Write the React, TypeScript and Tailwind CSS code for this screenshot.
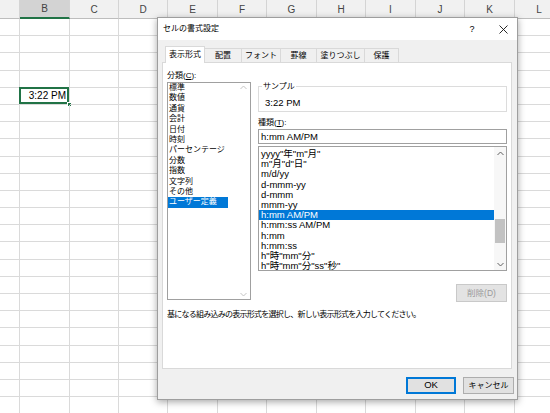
import React from "react";

const COLS = [
  { w: "w-[20px]", l: "" },
  { w: "w-[50px]", l: "B" },
  { w: "w-[49px]", l: "C" },
  { w: "w-[49px]", l: "D" },
  { w: "w-[50px]", l: "E" },
  { w: "w-[49px]", l: "F" },
  { w: "w-[50px]", l: "G" },
  { w: "w-[49px]", l: "H" },
  { w: "w-[50px]", l: "I" },
  { w: "w-[49px]", l: "J" },
  { w: "w-[50px]", l: "K" },
  { w: "w-[49px]", l: "L" },
];

const CATEGORIES = [
  "標準",
  "数値",
  "通貨",
  "会計",
  "日付",
  "時刻",
  "パーセンテージ",
  "分数",
  "指数",
  "文字列",
  "その他",
  "ユーザー定義",
];

const FORMATS = [
  'yyyy"年"m"月"',
  'm"月"d"日"',
  "m/d/yy",
  "d-mmm-yy",
  "d-mmm",
  "mmm-yy",
  "h:mm AM/PM",
  "h:mm:ss AM/PM",
  "h:mm",
  "h:mm:ss",
  'h"時"mm"分"',
  'h"時"mm"分"ss"秒"',
];

const TABS = [
  { t: "配置", w: "w-[37px]" },
  { t: "フォント", w: "w-[39px]" },
  { t: "罫線", w: "w-[36px]" },
  { t: "塗りつぶし", w: "w-[48px]" },
  { t: "保護", w: "w-[34px]" },
];

function Chevron({ up, color }: { up: boolean; color: string }) {
  return (
    <svg width="7" height="5" viewBox="0 0 7 5">
      <polyline
        points={up ? "0.5,4 3.5,1 6.5,4" : "0.5,1 3.5,4 6.5,1"}
        fill="none"
        stroke={color}
        strokeWidth="1"
      />
    </svg>
  );
}

export default function App() {
  return (
    <div className="relative w-[550px] h-[413px] overflow-hidden bg-white font-['Liberation_Sans','Noto_Sans_CJK_JP',sans-serif] text-black">
      {/* Sheet header */}
      <div className="flex h-[19px]">
        {COLS.map((c, i) => (
          <div
            key={i}
            className={`${c.w} shrink-0 h-full flex items-center justify-center border-r border-r-[#d4d4d4] text-[10px] text-[#444] ${
              i === 1
                ? "bg-[#d3d3d3] border-b-2 border-b-[#217346]"
                : "bg-[#f1f1f1] border-b border-b-[#bdbdbd]"
            }`}
          >
            {c.l}
          </div>
        ))}
      </div>
      {/* Sheet rows */}
      {Array.from({ length: 23 }).map((_, r) => (
        <div key={r} className="flex h-[17.2px]">
          {COLS.map((c, i) => (
            <div
              key={i}
              className={`${c.w} shrink-0 h-full border-r border-b border-[#dadada] relative`}
            >
              {r === 4 && i === 1 && (
                <>
                  <div className="absolute inset-0 flex items-center justify-end pr-[3px] text-[10px] leading-[12px]">
                    3:22 PM
                  </div>
                  <div className="absolute left-[-1px] top-[-1px] right-0 bottom-0 border-2 border-[#217346]" />
                  <div className="absolute right-[-3px] bottom-[-3px] w-[5px] h-[5px] bg-[#217346] border border-white" />
                </>
              )}
            </div>
          ))}
        </div>
      ))}

      {/* Dialog */}
      <div className="absolute left-[157px] top-[17px] w-[361px] h-[383px] bg-[#f0f0f0] border border-[#9e9e9e] shadow-[0_2px_7px_rgba(0,0,0,0.35)] flex flex-col">
        {/* Title bar */}
        <div className="h-[22px] shrink-0 bg-white flex items-center">
          <span className="ml-[5px] text-[8px] leading-[10px]">セルの書式設定</span>
          <span className="ml-auto w-[34px] flex justify-center text-[9px] leading-[10px]">?</span>
          <span className="w-[28px] flex justify-center">
            <svg width="9" height="9" viewBox="0 0 9 9">
              <path d="M0.5 0.5 L8.5 8.5 M8.5 0.5 L0.5 8.5" stroke="#111" strokeWidth="0.9" />
            </svg>
          </span>
        </div>

        {/* Body */}
        <div className="flex-1 flex flex-col pl-[4px] pr-[5px]">
          {/* Tabs */}
          <div className="flex items-end h-[22px] pl-[3px] relative z-10">
            <div className="w-[40px] h-[17px] mb-[-1px] bg-white border border-[#d9d9d9] border-b-0 flex items-center justify-center text-[8px] leading-[10px]">
              表示形式
            </div>
            {TABS.map((t) => (
              <div
                key={t.t}
                className={`${t.w} h-[14px] bg-[#f0f0f0] border-t border-r border-[#d9d9d9] flex items-center justify-center text-[8px] leading-[10px]`}
              >
                {t.t}
              </div>
            ))}
          </div>

          {/* Panel */}
          <div className="h-[307px] bg-white border border-[#d9d9d9] flex flex-col px-[4px] pt-[7px]">
            <div className="flex gap-[7px]">
              {/* Left column */}
              <div className="w-[84px] flex flex-col">
                <div className="h-[12px] leading-[12px] text-[8px]">
                  分類(<span className="underline">C</span>):
                </div>
                <div className="h-[218px] border border-[#a0a0a0] flex">
                  <div className="flex-1 flex flex-col">
                    {CATEGORIES.map((c, i) => (
                      <div
                        key={c}
                        className={`h-[10.4px] leading-[10.4px] text-[8px] pl-[1px] whitespace-nowrap ${
                          i === 11 ? "w-[60px] bg-[#0078d7] text-white" : ""
                        }`}
                      >
                        {c}
                      </div>
                    ))}
                  </div>
                  <div className="w-[13px] flex flex-col items-center justify-between py-[2px]">
                    <Chevron up color="#c4c4c4" />
                    <Chevron up={false} color="#c4c4c4" />
                  </div>
                </div>
              </div>

              {/* Right column */}
              <div className="w-[249px] flex flex-col">
                <fieldset className="mt-[11px] border border-[#dcdcdc] px-[6px] pb-[3px]">
                  <legend className="ml-[-3px] px-[1px] text-[8px] leading-[11px]">サンプル</legend>
                  <div className="pt-[5px] text-[9.5px] leading-[11px]">3:22 PM</div>
                </fieldset>
                <div className="mt-[5px] h-[12px] leading-[12px] text-[8px]">
                  種類(<span className="underline">T</span>):
                </div>
                <div className="h-[15px] border border-[#a0a0a0] pl-[2px] text-[9.5px] leading-[13px]">
                  h:mm AM/PM
                </div>
                <div className="mt-[2px] h-[125px] border border-[#a0a0a0] flex overflow-hidden">
                  <div className="flex-1 flex flex-col pt-[2px] overflow-hidden">
                    {FORMATS.map((f, i) => (
                      <div
                        key={f}
                        className={`h-[10.2px] shrink-0 leading-[10.2px] text-[9.5px] pl-[2px] whitespace-nowrap ${
                          i === 6 ? "bg-[#0078d7] text-white" : ""
                        }`}
                      >
                        {f}
                      </div>
                    ))}
                  </div>
                  <div className="w-[12px] bg-[#f7f7f7] flex flex-col items-center">
                    <div className="h-[12px] flex items-center justify-center">
                      <Chevron up color="#606060" />
                    </div>
                    <div className="flex-1 w-full px-[1px]">
                      <div className="mt-[60px] h-[24px] bg-[#c2c2c2]" />
                    </div>
                    <div className="h-[12px] flex items-center justify-center">
                      <Chevron up={false} color="#606060" />
                    </div>
                  </div>
                </div>
                <div className="self-end mt-[13px] w-[51px] h-[18px] bg-[#e3e3e3] border border-[#c9c9c9] flex items-center justify-center text-[8.5px] text-[#9a9a9a]">
                  削除(D)
                </div>
              </div>
            </div>
            <div className="mt-[8px] text-[8px] leading-[10px] tracking-[-0.75px] whitespace-nowrap">
              基になる組み込みの表示形式を選択し、新しい表示形式を入力してください。
            </div>
          </div>

          {/* Buttons */}
          <div className="mt-[8px] flex justify-end gap-[7px] mr-[-2px]">
            <div className="w-[50px] h-[17px] bg-[#e1e1e1] border border-[#0078d7] shadow-[inset_0_0_0_1px_#0078d7] flex items-center justify-center text-[9.5px]">
              OK
            </div>
            <div className="w-[51px] h-[17px] bg-[#e1e1e1] border border-[#adadad] flex items-center justify-center text-[8px]">
              キャンセル
            </div>
          </div>
        </div>
      </div>
    </div>
  );
}
